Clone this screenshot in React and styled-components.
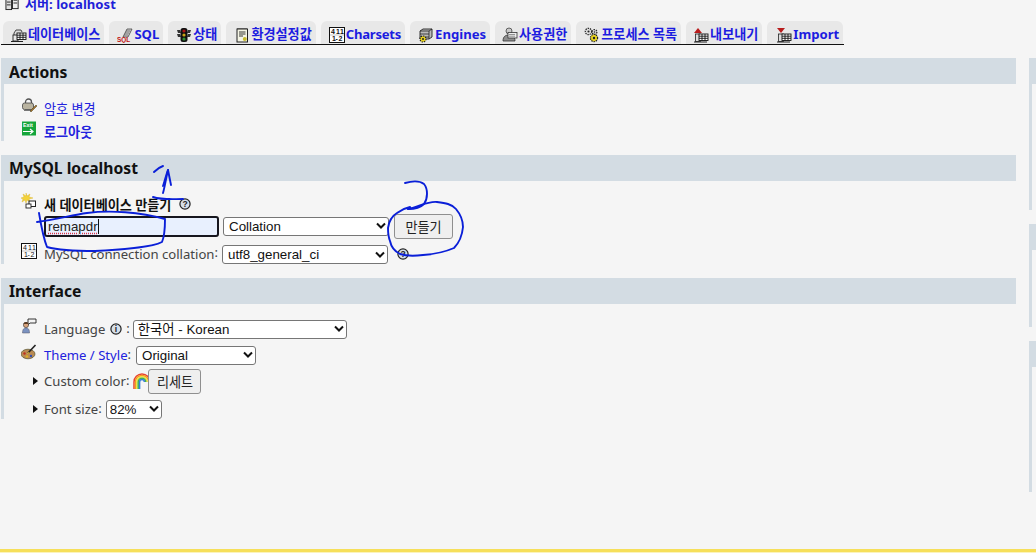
import React from "react";
import styled, { createGlobalStyle } from "styled-components";

const Global = createGlobalStyle`
  html, body { margin: 0; padding: 0; background: #f5f5f5; }
  body { font-family: "Noto Sans", "Noto Sans CJK KR", sans-serif; font-size: 13.12px; color: #444; overflow: hidden; }
`;

const Page = styled.div`
  position: relative; width: 1036px; height: 553px; overflow: hidden;
  display: flex; flex-direction: column; background: #f5f5f5;
`;
const Crumb = styled.div`
  display: flex; align-items: center; gap: 5px; height: 16px; margin: -5px 0 10px 5px;
  color: #1f1fd8; font-weight: 700; font-size: 13.12px; white-space: nowrap;
`;
const TabBar = styled.nav`
  display: flex; gap: 5px; width: 841px; height: 23px; margin: 0 0 13px 1px; padding-left: 2px;
  border-bottom: 1px solid #111;
`;
const Tab = styled.a`
  display: flex; align-items: center; gap: 1px; height: 23px; padding: 7px 4px 3px ${p => p.$pad ?? 8}px; box-sizing: border-box;
  background: #e8e8e8; border-radius: 6px 6px 0 0; color: #1c1ce0; font-weight: 700; font-size: 13.12px; white-space: nowrap; line-height: 1;
  letter-spacing: ${p => p.$ls || 0}px;
`;
const Columns = styled.div`
  display: grid; grid-template-columns: 1015px 7px; column-gap: 13px; margin-left: 1px; flex: 1;
`;
const Column = styled.div`
  display: flex; flex-direction: column; gap: 14px;
`;
const Panel = styled.section`
  height: ${p => p.$h}px; box-sizing: border-box; border-left: 3px solid #d3dce3; overflow: hidden;
`;
const Heading = styled.h2`
  margin: 0 0 0 -3px; height: 26px; padding-left: 8px; background: #d3dce3; color: #111; overflow: hidden;
  font-size: 15.7px; font-weight: 700; line-height: ${p => 26 + (p.$dy || 0) * 2}px; white-space: nowrap;
`;
const Body = styled.div`
  display: flex; flex-direction: column; padding: ${p => p.$top}px 0 0 17px;
`;
const Row = styled.div`
  display: flex; align-items: center; height: ${p => p.$h}px; white-space: nowrap;
`;
const IconSlot = styled.span`
  display: flex; width: 16px; height: 16px; margin-right: 7px; flex: none;
  transform: translateY(${p => -(p.$up || 0)}px);
`;
const LinkText = styled.a`
  color: #2222dd; font-weight: ${p => (p.$bold ? 700 : 400)};
`;
const Strong = styled.strong`
  color: #111; font-weight: 700;
`;
const Colon = styled.span`
  margin: 0 ${p => p.$r ?? 2}px 3px ${p => p.$l ?? 0}px;
`;
const Arrow = styled.span`
  width: 0; height: 0; flex: none; margin: 0 6px 0 12px;
  border-left: 5px solid #111; border-top: 4px solid transparent; border-bottom: 4px solid transparent;
`;
const FakeInput = styled.div`
  width: 175px; height: 21px; margin-left: 23px; box-sizing: border-box; display: flex; align-items: center; padding-left: 2px;
  background: #e8f0fe; border: 2px solid #16161e; border-radius: 3px;
  font-family: "Liberation Sans", Arial, sans-serif; font-size: 13.33px; color: #222;
`;
const Typed = styled.span`
  border-right: 1px solid #111; line-height: 15px;
  text-decoration: underline dotted #d8334a; text-underline-offset: 2px;
`;
const SelectWrap = styled.span`
  position: relative; display: inline-flex; flex: none;
  margin-left: ${p => p.$l || 0}px; transform: translateY(${p => p.$y || 0}px);
`;
const Select = styled.select`
  appearance: none; width: ${p => p.$w}px; height: 19px; box-sizing: border-box; padding: 0 0 0 ${p => p.$pad ?? 5}px; margin: 0;
  background: #fff; border: 1px solid #767676; border-radius: 3px; color: #111;
  font-family: "Liberation Sans", "Noto Sans CJK KR", Arial, sans-serif; font-size: 13.33px;
`;
const Chevron = styled.svg`
  position: absolute; right: 3px; top: 50%; margin-top: -4px; width: 10px; height: 8px; pointer-events: none;
`;
const Button = styled.button`
  height: 25px; width: ${p => p.$w}px; margin: 0 0 0 ${p => p.$l || 0}px; padding: 0; flex: none;
  background: #efefef; border: 1px solid #8f8f8f; border-radius: 3px; color: #222;
  font-family: "Noto Sans", "Noto Sans CJK KR", sans-serif; font-size: 13.12px;
`;
const Bottom = styled.div`
  position: absolute; left: 0; right: 0; bottom: 0; height: 4px; box-sizing: border-box;
  background: #fbf3bd; border-top: 3px solid #f6df5a;
`;
const Ink = styled.svg`
  position: absolute; left: 0; top: 0; width: 1036px; height: 553px; pointer-events: none;
`;
const Glyph = styled.svg`
  flex: none;
`;
const RainbowSvg = styled.svg`
  flex: none; margin-left: 1px;
`;
const RoundSvg = styled.svg`
  flex: none; margin-left: ${p => p.$l || 0}px;
`;

const S = ({ children, w = 16, h = 16 }) => <Glyph width={w} height={h} viewBox="0 0 16 16">{children}</Glyph>;

const TableMini = ({ x = 5, y = 7 }) => (
  <g stroke="#111" strokeWidth=".9" fill="#fff">
    <rect x={x} y={y} width="9" height="6.5" />
    <path d={`M${x} ${y + 2.2}H${x + 9}M${x} ${y + 4.3}H${x + 9}M${x + 3} ${y}V${y + 6.5}M${x + 6} ${y}V${y + 6.5}`} />
  </g>
);
const ServerIcon = () => <S w={15}><rect x="1" y="3" width="6" height="12" fill="#ddd" stroke="#222" /><rect x="8" y="2" width="6" height="12" fill="#eee" stroke="#222" /><path d="M9 5h4M9 8h4M2 7h4M2 10h4" stroke="#222" /></S>;
const DbIcon = () => <S><path d="M3 8V6l2-3h5l1 2" stroke="#333" strokeWidth=".9" fill="#ddd" /><rect x="2" y="8" width="5" height="6" fill="#e8e8e8" stroke="#222" strokeWidth=".9" /><path d="M0 14.5h12" stroke="#222" /><TableMini x={6} y={6} /></S>;
const SqlIcon = () => <S><path d="M6 10 10 2h5l-4 8z" fill="#ccc" stroke="#444" strokeWidth=".8" /><path d="M8 6h4M9 4h4M7 8h4" stroke="#555" strokeWidth=".7" /><text x="0" y="15" fontSize="6.4" fontWeight="700" fill="#c01010" fontFamily="Liberation Sans">SQL</text></S>;
const LightIcon = () => <S><path d="M1 3h3l1 3H2zM15 3h-3l-1 3h3zM1 7h3l1 3H2zM15 7h-3l-1 3h3z" fill="#333" /><rect x="4.5" y="1" width="7" height="14" rx="2.5" fill="#111" /><circle cx="8" cy="4" r="1.6" fill="#a81515" /><circle cx="8" cy="8" r="1.6" fill="#c9a414" /><circle cx="8" cy="12" r="1.6" fill="#2f8f2f" /></S>;
const NoteIcon = () => <S><rect x="3" y="2" width="10.5" height="13" fill="#f4f4e4" stroke="#222" /><path d="M4 2V1M6 2V1M8 2V1M10 2V1M12 2V1M5 5h6.5M5 7h6.5M5 9h4" stroke="#222" strokeWidth=".9" /><circle cx="10.8" cy="12" r="2" fill="#c8bb2c" /></S>;
const CharsetIcon = () => <S><rect x=".5" y=".5" width="15" height="15" fill="#fff" stroke="#111" /><path d="M1 8h14" stroke="#888" strokeWidth=".5" /><text x="2" y="7" fontSize="7" fill="#111" fontFamily="Liberation Sans">4</text><text x="7" y="7" fontSize="7" fill="#111" fontFamily="Liberation Sans">1</text><text x="11" y="7" fontSize="7" fill="#111" fontFamily="Liberation Sans">1</text><text x="3" y="14" fontSize="7" fill="#111" fontFamily="Liberation Sans">1</text><text x="6.5" y="14" fontSize="7" fill="#111" fontFamily="Liberation Sans">-</text><text x="9.5" y="14" fontSize="7" fill="#111" fontFamily="Liberation Sans">2</text></S>;
const Gear = ({ x, y, r = 3, c = "#e8d420" }) => <g><circle cx={x} cy={y} r={r} fill={c} stroke="#222" strokeWidth="1.2" strokeDasharray="1.4 .9" /><circle cx={x} cy={y} r={r / 3} fill="#222" /></g>;
const EngineIcon = () => <S><path d="M2 4 5 2h9v8l-3 2H2z" fill="#bbb" stroke="#222" strokeWidth=".9" /><path d="M2 4h9v8M11 4l3-2M2 7h9M2 10h9" stroke="#222" strokeWidth=".8" fill="none" /><Gear x={5} y={12} r={3} /></S>;
const UsersIcon = () => <S><circle cx="7" cy="4" r="3" fill="#c9c9c9" stroke="#444" strokeWidth=".8" /><path d="M1 14c0-5 3-6 6-6s6 1 6 6z" fill="#8d8d8d" stroke="#333" strokeWidth=".8" /><rect x="6" y="5.5" width="9" height="5.5" fill="#eee" stroke="#333" strokeWidth=".8" /><path d="M7 7.5h6M7 9.2h6" stroke="#555" strokeWidth=".6" /></S>;
const ProcessIcon = () => <S><Gear x={4.5} y={4.5} r={3.2} c="#ddd" /><Gear x={10.5} y={5} r={2.4} c="#ddd" /><Gear x={10} y={11} r={3.6} /></S>;
const TransferIcon = ({ down }) => <S><path d={down ? "M1 1h8L5 6z" : "M5 1l4 5H1z"} fill="#b81c1c" /><rect x="2.5" y="7" width="5" height="7.5" fill="#ddd" stroke="#222" strokeWidth=".8" /><path d="M1 15h13" stroke="#222" /><TableMini x={6} y={7} /></S>;
const ExportIcon = () => <TransferIcon />;
const ImportIcon = () => <TransferIcon down />;
const LockIcon = () => <S><path d="M4.5 6V4a3 3 0 0 1 6 0v2" fill="none" stroke="#555" strokeWidth="1.3" /><rect x="1.5" y="5" width="11" height="6.5" rx="2" fill="#b9b3a0" stroke="#444" strokeWidth=".8" /><path d="M3 12.5h7" stroke="#777" /><path d="M9 13l6-6 1 1-6 6z" fill="#a5702a" stroke="#442" strokeWidth=".5" /></S>;
const ExitIcon = () => <S><rect x="1" y="0.5" width="14" height="14" fill="#15a53a" /><text x="2" y="6.4" fontSize="5.4" fontWeight="700" fill="#fff" fontFamily="Liberation Sans">Exit</text><path d="M2 10.5h9M9 8l3 2.5L9 13" stroke="#fff" strokeWidth="1.2" fill="none" /></S>;
const NewDbIcon = () => <S><path d="M5 0l1 3 3-2-1 3 4 1-4 1 1 3-3-2-1 3-1-3-3 2 1-3-2-1 3-1-1-3 3 2z" fill="#f3d23a" stroke="#d8b020" strokeWidth=".4" /><rect x="8" y="8" width="6.5" height="5.5" fill="#fff" stroke="#222" /><rect x="5" y="11" width="5" height="4" fill="#fff" stroke="#222" strokeWidth=".9" /></S>;
const LanguageIcon = () => <S><path d="M7 1h8v4H9l-2 2z" fill="#f4f4f4" stroke="#222" strokeWidth=".9" /><circle cx="5" cy="7" r="2.6" fill="#d9a47c" stroke="#333" strokeWidth=".6" /><path d="M2.5 6c0-2 4-3 5 0z" fill="#5b3a22" /><path d="M1.5 15c0-4 1.5-5 3.5-5s3.5 1 3.5 5z" fill="#7b92c0" stroke="#556" strokeWidth=".5" /></S>;
const PaletteIcon = () => <S><ellipse cx="7" cy="10" rx="7" ry="4.8" fill="#b98a52" stroke="#553" strokeWidth=".7" /><circle cx="3.5" cy="9.5" r="1.2" fill="#c03020" /><circle cx="6" cy="12.4" r="1.2" fill="#e0b020" /><circle cx="10" cy="12" r="1.2" fill="#3050b0" /><path d="M7 9 14.5 1" stroke="#222" strokeWidth="1.6" /><path d="M6 10l1.5-2 1 1z" fill="#e8d030" /></S>;
const Rainbow = () => (
  <RainbowSvg width="18" height="18" viewBox="0 0 18 18">
    {[["#e8412f", 8], ["#f39a1f", 6.6], ["#f5e03a", 5.2], ["#43b649", 3.8], ["#3a7fd8", 2.4]].map(([c, r]) => (
      <path key={c} d={`M${9 - r} 17V${9 + 1}a${r} ${r} 0 0 1 ${2 * r} 0`} fill="none" stroke={c} strokeWidth="1.5" />
    ))}
  </RainbowSvg>
);
const Round = ({ mark, l }) => (
  <RoundSvg $l={l} width="12" height="12" viewBox="0 0 12 12">
    <circle cx="6" cy="6" r="5.1" fill="#d6e0ea" stroke="#222" strokeWidth="1.2" />
    <text x="6" y="9" textAnchor="middle" fontSize="8.5" fontWeight="700" fill="#222" fontFamily="Liberation Sans">{mark}</text>
  </RoundSvg>
);
const Drop = ({ w, l, y, pad, children }) => (
  <SelectWrap $l={l} $y={y}>
    <Select $w={w} $pad={pad} defaultValue={children}><option>{children}</option></Select>
    <Chevron viewBox="0 0 10 8"><path d="M1 1.5 5 5.5 9 1.5" fill="none" stroke="#111" strokeWidth="2" /></Chevron>
  </SelectWrap>
);

const tabs = [
  { I: DbIcon, label: "데이터베이스" },
  { I: SqlIcon, label: "SQL" },
  { I: LightIcon, label: "상태" },
  { I: NoteIcon, label: "환경설정값" },
  { I: CharsetIcon, label: "Charsets", ls: -0.25 },
  { I: EngineIcon, label: "Engines" },
  { I: UsersIcon, label: "사용권한", pad: 7 },
  { I: ProcessIcon, label: "프로세스 목록", pad: 8 },
  { I: ExportIcon, label: "내보내기", pad: 7 },
  { I: ImportIcon, label: "Import", pad: 9 },
];

export default function App() {
  return (
    <Page>
      <Global />
      <Crumb><ServerIcon />서버: localhost</Crumb>
      <TabBar>
        {tabs.map(({ I, label, pad, ls }) => <Tab key={label} $pad={pad} $ls={ls}><I />{label}</Tab>)}
      </TabBar>
      <Columns>
        <Column>
          <Panel $h={83}>
            <Heading $dy={1}>Actions</Heading>
            <Body $top={13}>
              <Row $h={23}><IconSlot $up={3}><LockIcon /></IconSlot><LinkText>암호 변경</LinkText></Row>
              <Row $h={22}><IconSlot $up={2}><ExitIcon /></IconSlot><LinkText $bold>로그아웃</LinkText></Row>
            </Body>
          </Panel>
          <Panel $h={109}>
            <Heading>MySQL localhost</Heading>
            <Body $top={14}>
              <Row $h={18}><IconSlot $up={3}><NewDbIcon /></IconSlot><Strong>새 데이터베이스 만들기</Strong><Round mark="?" l={8} /></Row>
              <Row $h={26}>
                <FakeInput><Typed>remapdr</Typed></FakeInput>
                <Drop w={166} l={4}>Collation</Drop>
                <Button $w={59} $l={5}>만들기</Button>
              </Row>
              <Row $h={29}>
                <IconSlot $up={3}><CharsetIcon /></IconSlot>MySQL connection collation<Colon $r={4}>:</Colon>
                <Drop w={166} y={1}>utf8_general_ci</Drop>
                <Round mark="?" l={9} />
              </Row>
            </Body>
          </Panel>
          <Panel $h={141}>
            <Heading>Interface</Heading>
            <Body $top={12}>
              <Row $h={26}><IconSlot $up={3}><LanguageIcon /></IconSlot>Language<Round mark="i" l={5} /><Colon $l={4} $r={3}>:</Colon><Drop w={214} pad={4}>한국어 - Korean</Drop></Row>
              <Row $h={26}><IconSlot $up={3}><PaletteIcon /></IconSlot><LinkText>Theme / Style</LinkText><Colon $r={5}>:</Colon><Drop w={120}>Original</Drop></Row>
              <Row $h={26}><Arrow />Custom color<Colon $r={3}>:</Colon><Rainbow /><Button $w={53} $l={-3}>리세트</Button></Row>
              <Row $h={30}><Arrow />Font size<Colon $r={4}>:</Colon><Drop w={56} pad={3}>82%</Drop></Row>
            </Body>
          </Panel>
        </Column>
        <Column>
          <Panel $h={152}><Heading /></Panel>
          <Panel $h={103}><Heading /></Panel>
          <Panel $h={151}><Heading /></Panel>
        </Column>
      </Columns>
      <Bottom />
      <Ink viewBox="0 0 1036 553" fill="none" stroke="#0a1fd8" strokeWidth="1.9" strokeLinecap="round" strokeLinejoin="round">
        <path d="M154 172C157 169 160 167 163 166" />
        <path d="M163 193C165 186 166 178 168 170C169 175 170 180 171 185" />
        <path d="M163 186C165 180 166 175 168 170" />
        <path d="M153 197C162 200 172 199 183 199" />
        <path d="M37 222C55 220 72 215 87 213C110 210 140 212 165 219C165 227 165 235 162 242C152 247 120 250 95 251C75 251 58 250 47 247C43 237 41 225 39 213" />
        <path d="M405 183C412 181 420 181 424 184C428 189 428 198 424 204C420 208 414 209 408 209" />
        <path d="M408 209C418 207 428 201 437 202C445 203 452 204 456 209C461 215 463 221 463 227C462 237 459 243 454 248C445 252 435 254 423 255C415 256 406 256 400 254C394 251 391 246 390 241C388 236 388 232 388 228C389 221 392 216 397 213C401 210 405 208 410 207" />
      </Ink>
    </Page>
  );
}
